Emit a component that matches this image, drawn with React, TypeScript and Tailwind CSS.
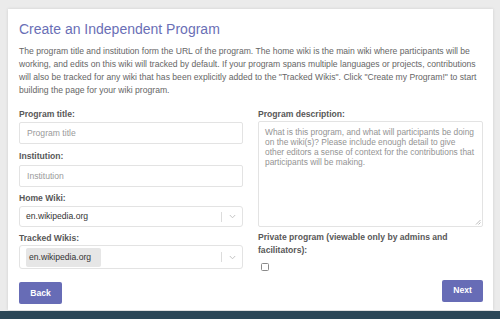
import React from "react";

const font = { fontFamily: '"Liberation Sans", Arial, sans-serif' };

function Chevron() {
  return (
    <div className="flex items-center h-full">
      <div className="w-px h-[10px] bg-[#dcdcdc]" />
      <div className="w-[20px] flex justify-center">
        <svg width="7" height="5" viewBox="0 0 7 5">
          <path d="M0.8 1 L3.5 3.8 L6.2 1" fill="none" stroke="#c4c4c4" strokeWidth="1" />
        </svg>
      </div>
    </div>
  );
}

export default function App() {
  return (
    <div className="w-[500px] h-[319px] bg-[#ebebeb] flex flex-col overflow-hidden" style={font}>
      <div className="ml-[8px] mt-[9px] w-[485px] h-[301px] bg-white shadow-[0_0_3px_rgba(0,0,0,0.12)] pl-[11px] pr-[9px] pt-[11px]">
        <h1 className="text-[14px] leading-[18px] text-[#6a6fb6] font-normal">Create an Independent Program</h1>
        <p className="mt-[7px] text-[8.6px] leading-[13px] text-[#666] pr-[4px]">
          The program title and institution form the URL of the program. The home wiki is the main wiki where participants will be working, and edits on this wiki will tracked by default. If your program spans multiple languages or projects, contributions will also be tracked for any wiki that has been explicitly added to the "Tracked Wikis". Click "Create my Program!" to start building the page for your wiki program.
        </p>
        <div className="mt-[11px] grid grid-cols-[224px_225px] gap-x-[15px]">
          <div className="flex flex-col">
            <label className="text-[8.6px] leading-[12px] font-bold text-[#585858]">Program title:</label>
            <div className="mt-[2px] h-[22px] border border-[#e3e3e3] rounded-[2px] flex items-center pl-[7px] text-[8.6px] text-[#9a9a9a]">Program title</div>
            <label className="mt-[6px] text-[8.6px] leading-[12px] font-bold text-[#585858]">Institution:</label>
            <div className="mt-[3px] h-[22px] border border-[#e3e3e3] rounded-[2px] flex items-center pl-[7px] text-[8.6px] text-[#9a9a9a]">Institution</div>
            <label className="mt-[5px] text-[8.6px] leading-[12px] font-bold text-[#585858]">Home Wiki:</label>
            <div className="mt-[2px] h-[21px] border border-[#e3e3e3] rounded-[3px] flex items-center justify-between pl-[6px] text-[8.6px] text-[#333]">
              <span>en.wikipedia.org</span>
              <Chevron />
            </div>
            <label className="mt-[5px] text-[8.6px] leading-[12px] font-bold text-[#585858]">Tracked Wikis:</label>
            <div className="mt-[1px] h-[24px] border border-[#e3e3e3] rounded-[3px] flex items-center justify-between pl-[6px] text-[8.6px] text-[#333]">
              <span className="bg-[#e6e6e6] h-[19px] w-[75px] flex items-center pl-[3px] rounded-[2px]">en.wikipedia.org</span>
              <Chevron />
            </div>
            <div className="mt-[10px]">
              <button className="w-[43px] h-[22px] bg-[#676cb6] rounded-[2px] text-white text-[8.6px] font-bold">Back</button>
            </div>
          </div>
          <div className="flex flex-col">
            <label className="text-[8.6px] leading-[12px] font-bold text-[#585858]">Program description:</label>
            <div className="relative mt-[1px] h-[106px] border border-[#e3e3e3] rounded-[2px] pl-[6px] pr-[6px] pt-[5px] text-[8.4px] leading-[10px] text-[#939393]">
              What is this program, and what will participants be doing on the wiki(s)? Please include enough detail to give other editors a sense of context for the contributions that participants will be making.
              <svg className="absolute right-[1px] bottom-[1px]" width="6" height="6" viewBox="0 0 6 6">
                <path d="M5.5 1 L1 5.5 M5.5 3.5 L3.5 5.5" stroke="#aaa" strokeWidth="0.8" />
              </svg>
            </div>
            <label className="mt-[4px] text-[8.6px] leading-[13.4px] font-bold text-[#585858]">Private program (viewable only by admins and facilitators):</label>
            <div className="mt-[5px] ml-[3px] w-[8px] h-[8px] border border-[#8a8a8a] rounded-[1.5px] bg-white" />
            <div className="mt-[9px] flex justify-end">
              <button className="w-[41px] h-[22px] bg-[#676cb6] rounded-[2px] text-white text-[8.6px] font-bold">Next</button>
            </div>
          </div>
        </div>
      </div>
      <div className="flex-1 mt-[1px] bg-[#2c4757]" />
    </div>
  );
}
